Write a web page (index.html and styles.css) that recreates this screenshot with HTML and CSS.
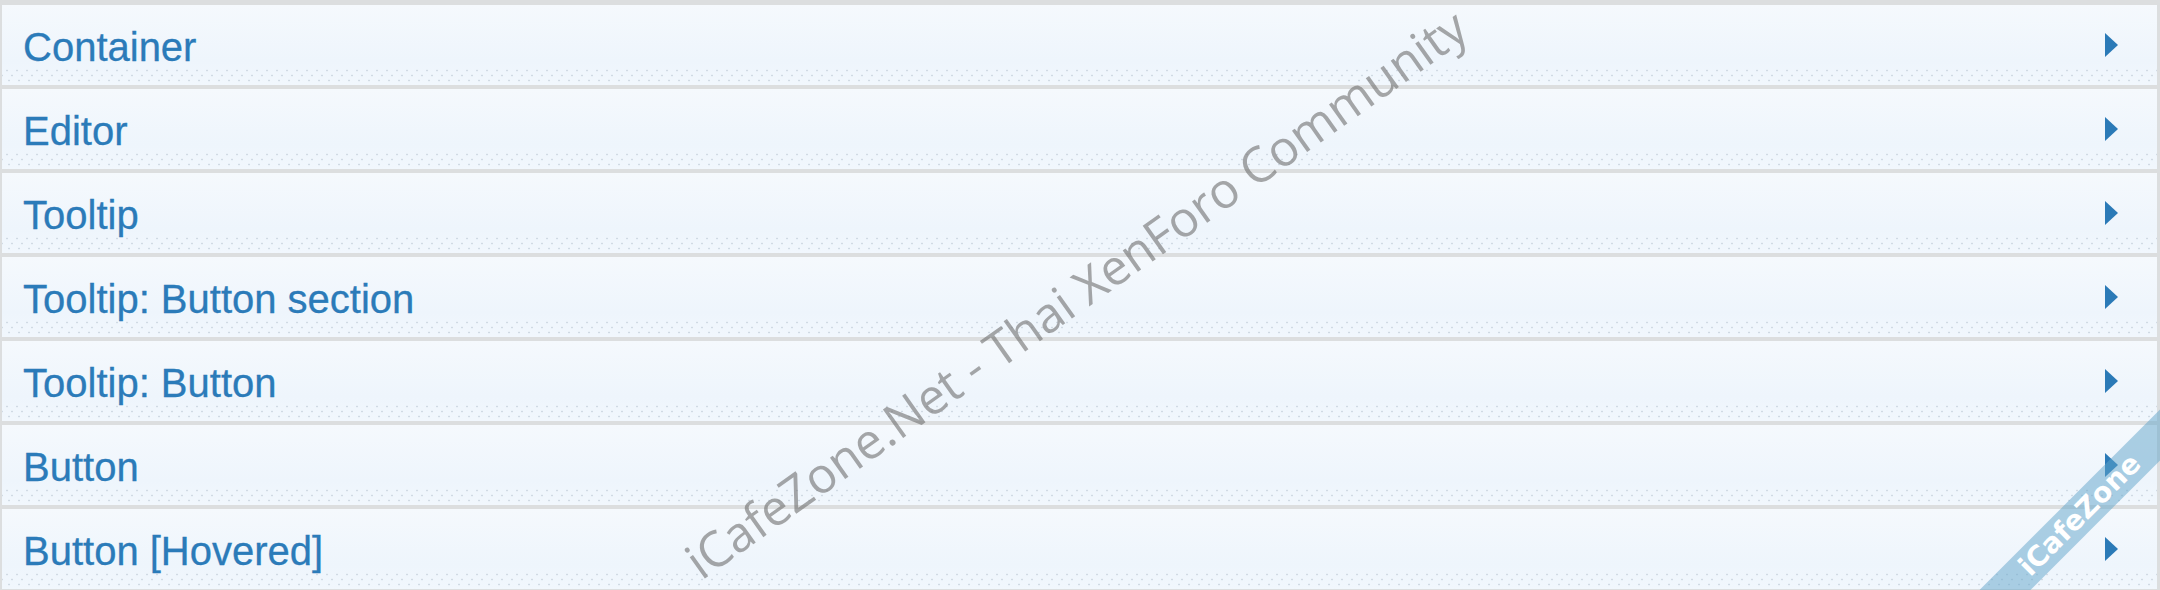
FILE: index.html
```html
<!DOCTYPE html>
<html lang="en">
<head>
    <meta charset="UTF-8">
    <meta name="viewport" content="width=device-width, initial-scale=1.0">
    <title>Style Properties</title>
    <link rel="stylesheet" href="styles.css">
</head>
<body>
    <div class="page">
        <ul class="nav-list">
            <li class="nav-row"><span class="nav-label">Container</span><span class="nav-arrow"></span></li>
            <li class="nav-row"><span class="nav-label">Editor</span><span class="nav-arrow"></span></li>
            <li class="nav-row"><span class="nav-label">Tooltip</span><span class="nav-arrow"></span></li>
            <li class="nav-row"><span class="nav-label">Tooltip: Button section</span><span class="nav-arrow"></span></li>
            <li class="nav-row"><span class="nav-label">Tooltip: Button</span><span class="nav-arrow"></span></li>
            <li class="nav-row"><span class="nav-label">Button</span><span class="nav-arrow"></span></li>
            <li class="nav-row"><span class="nav-label">Button [Hovered]</span><span class="nav-arrow"></span></li>
        </ul>

        <!-- watermark over the list -->
        <div class="watermark">iCafeZone.Net - Thai XenForo Community</div>
        <div class="ribbon">iCafeZone</div>
    </div>
</body>
</html>
```

FILE: styles.css
```css
html, body {
    margin: 0;
    padding: 0;
    background-color: #ffffff;
}
.page {
    position: relative;
    width: 2160px;
    height: 590px;
    overflow: hidden;
    font-family: 'Liberation Sans', Arial, sans-serif;
}
.nav-list {
    list-style: none;
    margin: 0;
    padding: 0;
    border-top: 5px solid #dcdedf;
    border-left: 2px solid #dcdedf;
    border-right: 3px solid #dcdedf;
}
.nav-row {
    display: flex;
    align-items: center;
    justify-content: space-between;
    box-sizing: border-box;
    height: 84px;
    padding: 4px 39px 0 21px;
    border-bottom: 4px solid #dcdedf;
    background:
        radial-gradient(circle, #d0dae4 0.7px, transparent 1.2px) 0 calc(100% - 12px) / 10px 5px repeat-x,
        radial-gradient(circle, #d0dae4 0.7px, transparent 1.2px) 5px calc(100% - 7px) / 10px 5px repeat-x,
        radial-gradient(circle, #d0dae4 0.7px, transparent 1.2px) 2px calc(100% - 2px) / 10px 5px repeat-x,
        linear-gradient(#f5f9fd, #eef5fc 70%, #f1f7fd);
}
.nav-label {
    font-size: 40px;
    color: #2b7bb9;
    -webkit-text-stroke: 0.3px #2b7bb9;
}
.nav-arrow {
    width: 0;
    height: 0;
    margin-top: -4px;
    border-left: 13px solid #2b7ab7;
    border-top: 12px solid transparent;
    border-bottom: 12px solid transparent;
}
.watermark {
    position: absolute;
    left: 676px;
    top: 545px;
    transform: rotate(-35.3deg);
    transform-origin: 0 0;
    font-family: 'Open Sans', sans-serif;
    font-size: 49px;
    line-height: 50px;
    white-space: nowrap;
    color: rgba(110, 110, 110, 0.6);
}
.ribbon {
    position: absolute;
    left: 1920px;
    top: 497px;
    width: 320px;
    height: 36px;
    line-height: 36px;
    transform: rotate(-45deg);
    background-color: rgba(96, 163, 202, 0.5);
    color: #ffffff;
    font-family: 'DejaVu Sans', sans-serif;
    font-weight: bold;
    font-size: 28px;
    text-align: center;
}
```
